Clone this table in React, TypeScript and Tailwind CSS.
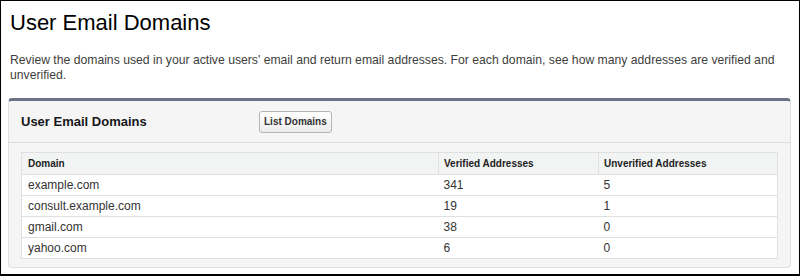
const rows = [
  { domain: "example.com", verified: 341, unverified: 5 },
  { domain: "consult.example.com", verified: 19, unverified: 1 },
  { domain: "gmail.com", verified: 38, unverified: 0 },
  { domain: "yahoo.com", verified: 6, unverified: 0 },
];

export default function App() {
  return (
    <div
      className="w-[800px] h-[276px] bg-white"
      style={{ fontFamily: '"Liberation Sans", Arial, sans-serif' }}
    >
      <div className="h-[276px] border border-b-2 border-black px-[7px]">
        <h1 className="text-[22px] leading-[26px] text-black pt-[9px] pl-[2px]">User Email Domains</h1>
        <p className="mt-[17px] text-[12.2px] leading-[15px] text-[#3e3e3c] pl-[2px]">
          Review the domains used in your active users' email and return email addresses. For each domain, see how many
          addresses are verified and unverified.
        </p>

        <div className="mt-[15px] border border-[#e0e0e0] border-t-[3px] border-t-[#6b7287] rounded-[4px] bg-[#f5f5f5] w-[783px]">
          <div className="flex items-center h-[42px] border-b border-[#dcdcdc] px-[12px]">
            <div className="w-[238px] text-[13px] font-bold text-[#16171a]">User Email Domains</div>
            <button className="h-[22px] px-[4px] text-[10px] font-bold text-[#333] border border-[#b5b5b5] rounded-[3px] bg-gradient-to-b from-white to-[#ececec]">
              List Domains
            </button>
          </div>
          <div className="px-[12px] pt-[9px] pb-[8px]">
            <table className="w-full border-collapse border border-[#e0e0e0] bg-white text-left">
              <thead>
                <tr className="bg-[#f2f3f3] h-[22px]">
                  <th className="w-[417px] border border-[#e0e0e0] pl-[6px] text-[10px] font-bold text-[#222]">Domain</th>
                  <th className="w-[160px] border border-[#e0e0e0] pl-[5px] text-[10px] font-bold text-[#222]">Verified Addresses</th>
                  <th className="border border-[#e0e0e0] pl-[5px] text-[10px] font-bold text-[#222]">Unverified Addresses</th>
                </tr>
              </thead>
              <tbody>
                {rows.map((r) => (
                  <tr key={r.domain} className="h-[21px] text-[12px] text-[#333]">
                    <td className="border-t border-[#e0e0e0] pl-[6px]">{r.domain}</td>
                    <td className="border-t border-[#e0e0e0] pl-[5px]">{r.verified}</td>
                    <td className="border-t border-[#e0e0e0] pl-[5px]">{r.unverified}</td>
                  </tr>
                ))}
              </tbody>
            </table>
          </div>
        </div>
      </div>
    </div>
  );
}
